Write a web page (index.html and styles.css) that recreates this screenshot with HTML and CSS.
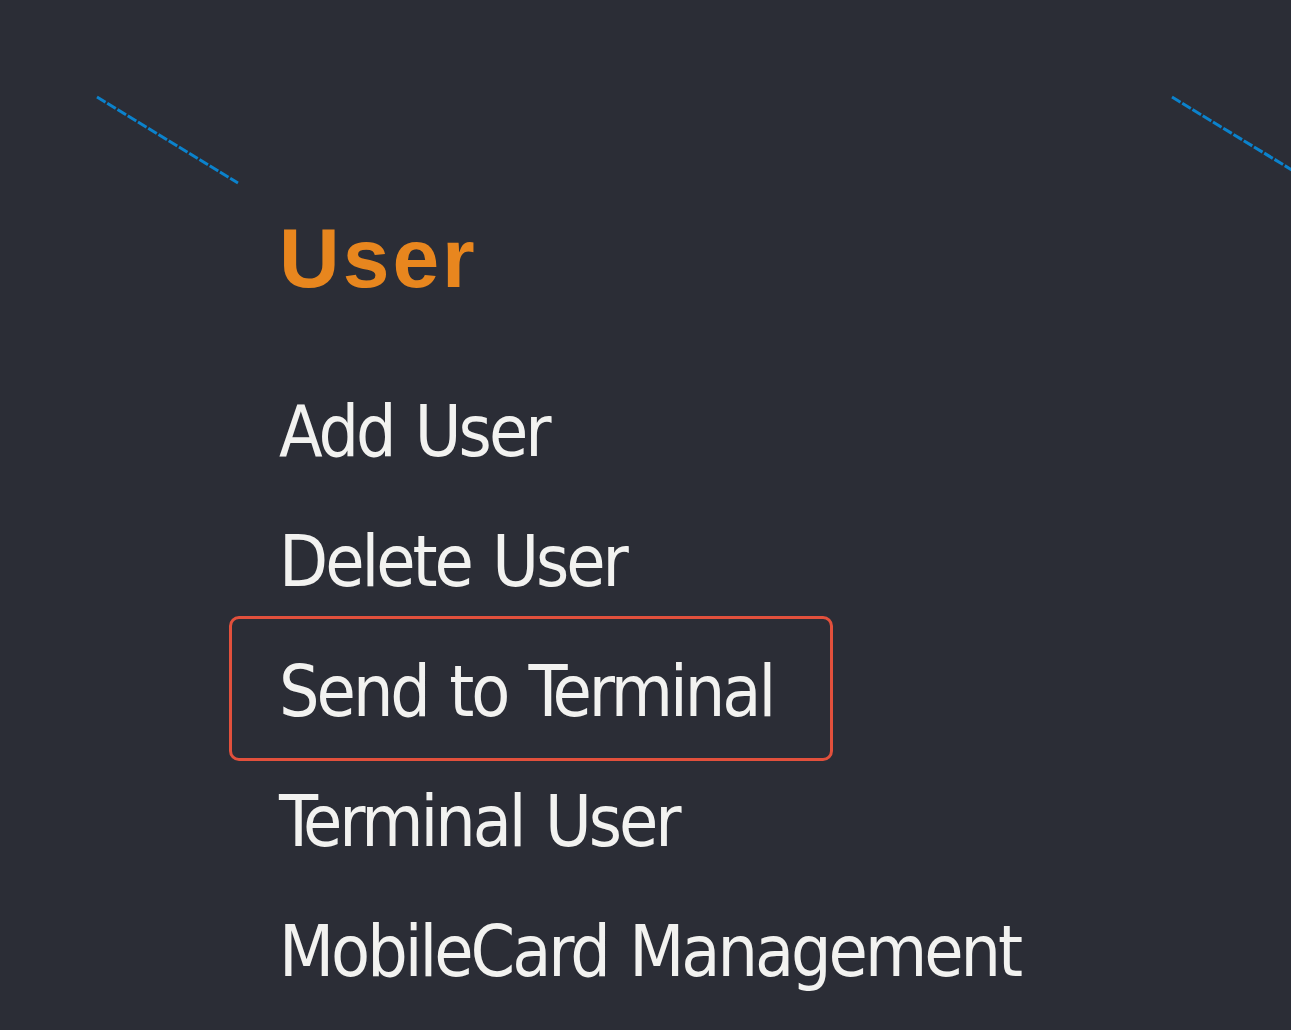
FILE: index.html
```html
<!DOCTYPE html>
<html lang="en">
<head>
<meta charset="utf-8">
<title>User menu</title>
<link rel="stylesheet" href="styles.css">
</head>
<body>
<div class="page">
  <svg class="deco" width="1291" height="1030" viewBox="0 0 1291 1030" aria-hidden="true">
    <line x1="97" y1="97" x2="238" y2="183" class="dash"/>
    <line x1="1172" y1="97" x2="1310" y2="181" class="dash"/>
  </svg>
  <nav class="menu">
    <h2 class="menu-title">User</h2>
    <ul class="menu-list">
      <li class="menu-item">Add User</li>
      <li class="menu-item">Delete User</li>
      <li class="menu-item is-marked">Send to Terminal</li>
      <li class="menu-item">Terminal User</li>
      <li class="menu-item">MobileCard Management</li>
    </ul>
  </nav>
</div>
</body>
</html>
```

FILE: styles.css
```css
html, body {
  margin: 0;
  padding: 0;
  background: #2b2d36;
}

.page {
  position: relative;
  width: 1291px;
  height: 1030px;
  overflow: hidden;
  background: #2b2d36;
}

.deco {
  position: absolute;
  left: 0;
  top: 0;
}

.dash {
  stroke: #0b82cc;
  stroke-width: 3;
  stroke-dasharray: 10 2;
}

.menu {
  padding: 211px 0 0 279px;
}

.menu-title {
  margin: 0 0 62px 0;
  font-family: "Liberation Sans", Arial, sans-serif;
  font-weight: bold;
  font-size: 84px;
  line-height: 94px;
  letter-spacing: 3px;
  color: #e8861e;
}

.menu-list {
  list-style: none;
  margin: 0;
  padding: 0;
}

.menu-item {
  position: relative;
  font-family: "DejaVu Sans Condensed", "DejaVu Sans", sans-serif;
  font-size: 71px;
  line-height: 130px;
  height: 130px;
  letter-spacing: -3px;
  word-spacing: 4px;
  color: #f2f2f0;
  white-space: nowrap;
}

.menu-item.is-marked::after {
  content: "";
  position: absolute;
  left: -50px;
  top: -11px;
  width: 598px;
  height: 139px;
  border: 3px solid #e2503c;
  border-radius: 10px;
}
```
